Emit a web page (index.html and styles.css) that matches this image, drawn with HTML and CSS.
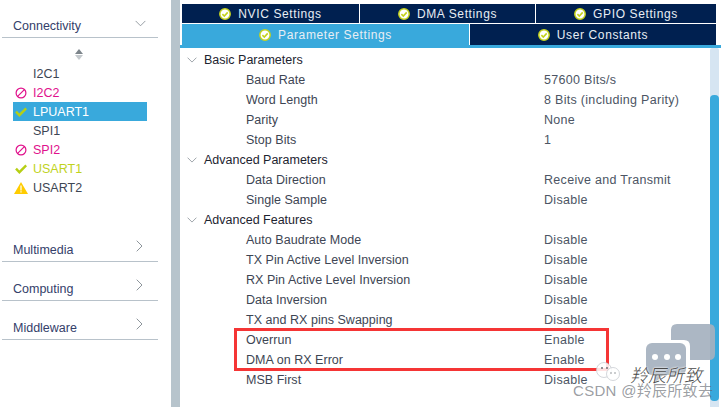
FILE: index.html
```html
<!DOCTYPE html>
<html lang="en">
<head>
<meta charset="utf-8">
<title>LPUART1 Configuration</title>
<link rel="stylesheet" href="styles.css">
</head>
<body>
<svg class="defs" width="0" height="0" aria-hidden="true">
  <symbol id="ok" viewBox="0 0 12 12">
    <circle cx="6" cy="6" r="5.2" fill="#fff" stroke="#c4d21c" stroke-width="1.5"/>
    <path d="M3.4 6.1 5.3 8 8.7 4.4" fill="none" stroke="#c4d21c" stroke-width="1.6"/>
  </symbol>
  <symbol id="ban" viewBox="0 0 12 12">
    <circle cx="6" cy="6" r="4.9" fill="none" stroke="#e0118c" stroke-width="1.2"/>
    <path d="M2.6 9.4 9.4 2.6" stroke="#e0118c" stroke-width="1.2"/>
  </symbol>
  <symbol id="tick" viewBox="0 0 12 12">
    <path d="M1 5.6 4.4 9.2 11.2 2.4" fill="none" stroke="#b6cf14" stroke-width="2.4"/>
  </symbol>
  <symbol id="warn" viewBox="0 0 14 12">
    <path d="M7 0 14 12H0Z" fill="#ffcc00"/>
    <path d="M6.4 3.5h1.2v5H6.4zM6.4 9.3h1.2v1.3H6.4z" fill="#fff"/>
  </symbol>
  <symbol id="down" viewBox="0 0 12 7"><path d="M.7.7 6 6 11.3.7" fill="none" stroke="#8d959b" stroke-width="1"/></symbol>
  <symbol id="right" viewBox="0 0 7 12"><path d="M.7.7 6 6 .7 11.3" fill="none" stroke="#8d959b" stroke-width="1"/></symbol>
</svg>
<div class="app">
  <aside class="side">
    <div class="group"><span>Connectivity</span><svg class="chev-d"><use href="#down"/></svg></div>
    <div class="sort"><i class="up"></i><i class="dn"></i></div>
    <ul class="list">
      <li class="item"><span class="ic"></span>I2C1</li>
      <li class="item pink"><svg class="ic"><use href="#ban"/></svg>I2C2</li>
      <li class="item sel"><svg class="ic"><use href="#tick"/></svg>LPUART1</li>
      <li class="item"><span class="ic"></span>SPI1</li>
      <li class="item pink"><svg class="ic"><use href="#ban"/></svg>SPI2</li>
      <li class="item lime"><svg class="ic"><use href="#tick"/></svg>USART1</li>
      <li class="item"><svg class="ic"><use href="#warn"/></svg>USART2</li>
    </ul>
    <div class="group first"><span>Multimedia</span><svg class="chev-r"><use href="#right"/></svg></div>
    <div class="group next"><span>Computing</span><svg class="chev-r"><use href="#right"/></svg></div>
    <div class="group next"><span>Middleware</span><svg class="chev-r"><use href="#right"/></svg></div>
  </aside>
  <div class="split"></div>
  <main class="main">
    <div class="tabs">
      <div class="tabrow">
        <div class="tab t1"><svg class="tic"><use href="#ok"/></svg>NVIC Settings</div>
        <div class="tab t2"><svg class="tic"><use href="#ok"/></svg>DMA Settings</div>
        <div class="tab t3"><svg class="tic"><use href="#ok"/></svg>GPIO Settings</div>
      </div>
      <div class="tabrow second">
        <div class="tab active"><svg class="tic"><use href="#ok"/></svg>Parameter Settings</div>
        <div class="tab grow"><svg class="tic"><use href="#ok"/></svg>User Constants</div>
      </div>
    </div>
    <div class="body">
      <div class="tree">
        <div class="row head"><svg class="chev-t"><use href="#down"/></svg>Basic Parameters</div>
        <div class="row"><span class="k">Baud Rate</span><span class="v">57600 Bits/s</span></div>
        <div class="row"><span class="k">Word Length</span><span class="v">8 Bits (including Parity)</span></div>
        <div class="row"><span class="k">Parity</span><span class="v">None</span></div>
        <div class="row"><span class="k">Stop Bits</span><span class="v">1</span></div>
        <div class="row head"><svg class="chev-t"><use href="#down"/></svg>Advanced Parameters</div>
        <div class="row"><span class="k">Data Direction</span><span class="v">Receive and Transmit</span></div>
        <div class="row"><span class="k">Single Sample</span><span class="v">Disable</span></div>
        <div class="row head"><svg class="chev-t"><use href="#down"/></svg>Advanced Features</div>
        <div class="row"><span class="k">Auto Baudrate Mode</span><span class="v">Disable</span></div>
        <div class="row"><span class="k">TX Pin Active Level Inversion</span><span class="v">Disable</span></div>
        <div class="row"><span class="k">RX Pin Active Level Inversion</span><span class="v">Disable</span></div>
        <div class="row"><span class="k">Data Inversion</span><span class="v">Disable</span></div>
        <div class="row"><span class="k">TX and RX pins Swapping</span><span class="v">Disable</span></div>
        <div class="row"><span class="k">Overrun</span><span class="v">Enable</span></div>
        <div class="row"><span class="k">DMA on RX Error</span><span class="v">Enable</span></div>
        <div class="row"><span class="k">MSB First</span><span class="v">Disable</span></div>
      </div>
      <div class="scroll"><div class="thumb"></div></div>
      <div class="redbox"></div>
    </div>
  </main>
</div>
<div class="wm">
  <svg class="bubbles" viewBox="0 0 70 62" width="70" height="62" aria-hidden="true">
    <path d="M25 6Q25 0 31 0H63Q69 0 69 6V30Q69 36 63 36H44V22Q44 16 38 16H25Z" fill="#a5b1bf"/>
    <rect x="0" y="19" width="40" height="32" rx="6" fill="#a5b1bf"/>
    <path d="M8 49V60L19 49Z" fill="#a5b1bf"/>
    <circle cx="9" cy="33" r="3" fill="#fff"/><circle cx="21" cy="33" r="3" fill="#fff"/><circle cx="32" cy="33" r="3" fill="#fff"/>
  </svg>
  <svg class="logo" viewBox="0 0 26 20" width="26" height="20" aria-hidden="true">
    <circle cx="9" cy="8" r="7.5" fill="#fff" fill-opacity=".85" stroke="#c9cdd2" stroke-width=".8"/>
    <circle cx="18" cy="12" r="6.5" fill="#fff" fill-opacity=".85" stroke="#c9cdd2" stroke-width=".8"/>
    <circle cx="7" cy="6" r="1" fill="#6c7076"/><circle cx="12" cy="6" r="1" fill="#6c7076"/>
    <circle cx="16" cy="11" r=".8" fill="#8a8e93"/><circle cx="20" cy="11" r=".8" fill="#8a8e93"/>
  </svg>
  <span class="wm-name">羚辰所致</span>
  <span class="wm-csdn">CSDN @羚辰所致去</span>
</div>
</body>
</html>
```
FILE: styles.css
```css
* { box-sizing: border-box; }
html, body { margin: 0; padding: 0; }
body {
  width: 724px;
  height: 407px;
  overflow: hidden;
  position: relative;
  background: #fff;
  font-family: "Liberation Sans", Arial, sans-serif;
  font-size: 12px;
  color: #3d4553;
}
.defs { position: absolute; }
.app { display: flex; height: 407px; }

.side { width: 171px; flex: none; padding: 11px 0 0 2px; }
.group {
  width: 156px;
  height: 27px;
  border-bottom: 1px solid #b8c2ca;
  padding: 4px 7px 0 11px;
  display: flex;
  align-items: center;
  justify-content: space-between;
  color: #34406a;
  font-size: 12.5px;
}
.group.next { margin-top: 12px; }
.group.first { margin-top: 38px; }
.chev-d { width: 11px; height: 7px; margin: -5px 5px 0 0; }
.chev-r { width: 7px; height: 12px; margin: -8px 8px 0 0; }
.sort { height: 26px; padding: 11px 0 0 73px; display: flex; flex-direction: column; }
.sort i { display: block; width: 0; border-left: 4px solid transparent; border-right: 4px solid transparent; }
.sort .up { border-bottom: 5px solid #7d858b; margin-bottom: 1px; }
.sort .dn { border-top: 5px solid #c4c9cd; }
.list { list-style: none; margin: 0 0 0 11px; padding: 0; width: 134px; }
.item { height: 19px; display: flex; align-items: center; padding-left: 2px; font-size: 12.5px; }
.ic { width: 12px; height: 12px; margin-right: 6px; flex: none; display: block; }
.pink { color: #e0118c; }
.lime { color: #bfd31e; }
.sel { background: #39a9dc; color: #fff; }
.item:nth-child(7) .ic { width: 14px; margin-left: -1px; margin-right: 5px; }

.split { width: 9px; flex: none; background: #b7c4cc; }

.main { flex: 1; min-width: 0; display: flex; flex-direction: column; }
.tabs { padding: 4px 5px 0 2px; flex: none; height: 48px; border-bottom: 3px solid #39a9dc; margin-right: 3px; }
.tabrow { display: flex; height: 19px; gap: 1px; }
.tabrow.second { height: 21px; margin-top: 1px; }
.tab {
  background: #002050;
  color: #e8eef4;
  display: flex;
  align-items: center;
  justify-content: center;
  letter-spacing: .62px;
  padding-top: 1px;
}
.t1 { width: 177px; }
.t2 { width: 175px; }
.t3 { flex: 1; }
.active { width: 287px; background: #39a9dc; }
.grow { flex: 1; }
.tic { width: 12px; height: 12px; margin-right: 7px; flex: none; }

.body { position: relative; flex: 1; min-height: 0; display: flex; }
.tree { flex: 1; padding-top: 2px; }
.row { height: 20px; display: flex; align-items: center; color: #3d4553; font-size: 12.5px; letter-spacing: .03px; }
.head { color: #1d2430; padding-left: 7px; letter-spacing: 0; }
.chev-t { width: 10px; height: 6px; margin-right: 7px; flex: none; }
.k { width: 364px; padding-left: 66px; flex: none; }
.v { letter-spacing: .3px; color: #4c5564; }
.scroll { width: 9px; flex: none; margin-right: 5px; background: #d6e5f2; border-radius: 2px 2px 0 0; padding: 47px 0 6px; }
.thumb { height: 100%; background: #39a9dc; border-radius: 4px; }
.redbox {
  position: absolute;
  left: 54px;
  top: 280px;
  width: 375px;
  height: 43px;
  border: 3px solid #f53535;
  pointer-events: none;
}

.wm { position: absolute; inset: 0; pointer-events: none; }
.bubbles { position: absolute; left: 646px; top: 324px; opacity: .92; }
.logo { position: absolute; left: 595px; top: 362px; }
.wm-name {
  position: absolute;
  left: 630px;
  top: 365px;
  font: italic 300 18px/18px "Noto Sans CJK SC", sans-serif;
  color: #4a4a4a;
  text-shadow: 0 0 2px #fff, 0 0 2px #fff;
}
.wm-csdn {
  position: absolute;
  left: 573px;
  top: 383px;
  font: 15px/15px "Liberation Sans", "Noto Sans CJK SC", sans-serif;
  letter-spacing: .3px;
  color: rgba(90, 96, 105, .62);
  white-space: nowrap;
}
```
